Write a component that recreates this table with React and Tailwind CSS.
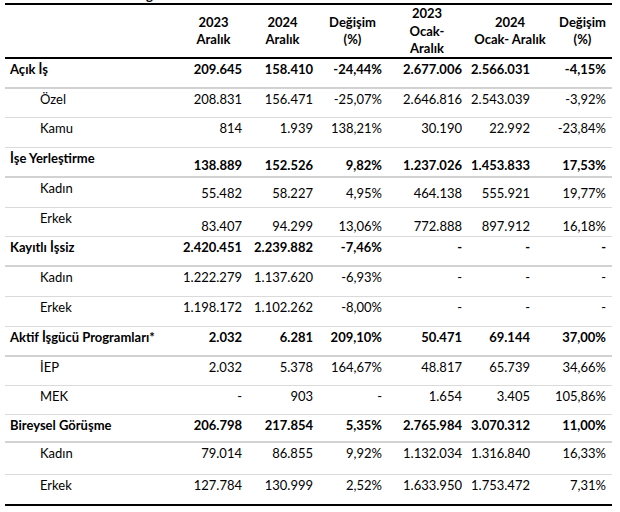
import React from 'react';

const rows = [
  { label: 'Açık İş', group: true, h: 'h-[30px]', v: ['209.645', '158.410', '-24,44%', '2.677.006', '2.566.031', '-4,15%'] },
  { label: 'Özel', h: 'h-[29px]', v: ['208.831', '156.471', '-25,07%', '2.646.816', '2.543.039', '-3,92%'] },
  { label: 'Kamu', h: 'h-[30px]', v: ['814', '1.939', '138,21%', '30.190', '22.992', '-23,84%'] },
  { label: 'İşe Yerleştirme', group: true, low: 'pt-[7px]', h: 'h-[30px]', v: ['138.889', '152.526', '9,82%', '1.237.026', '1.453.833', '17,53%'] },
  { label: 'Kadın', low: 'pt-[5px]', h: 'h-[30px]', v: ['55.482', '58.227', '4,95%', '464.138', '555.921', '19,77%'] },
  { label: 'Erkek', low: 'pt-[8px]', h: 'h-[29px]', v: ['83.407', '94.299', '13,06%', '772.888', '897.912', '16,18%'] },
  { label: 'Kayıtlı İşsiz', group: true, h: 'h-[30px]', v: ['2.420.451', '2.239.882', '-7,46%', '-', '-', '-'] },
  { label: 'Kadın', h: 'h-[30px]', v: ['1.222.279', '1.137.620', '-6,93%', '-', '-', '-'] },
  { label: 'Erkek', h: 'h-[30px]', v: ['1.198.172', '1.102.262', '-8,00%', '-', '-', '-'] },
  { label: 'Aktif İşgücü Programları*', group: true, h: 'h-[30px]', v: ['2.032', '6.281', '209,10%', '50.471', '69.144', '37,00%'] },
  { label: 'İEP', h: 'h-[29px]', v: ['2.032', '5.378', '164,67%', '48.817', '65.739', '34,66%'] },
  { label: 'MEK', h: 'h-[29px]', v: ['-', '903', '-', '1.654', '3.405', '105,86%'] },
  { label: 'Bireysel Görüşme', group: true, h: 'h-[28px]', v: ['206.798', '217.854', '5,35%', '2.765.984', '3.070.312', '11,00%'] },
  { label: 'Kadın', h: 'h-[32px]', v: ['79.014', '86.855', '9,92%', '1.132.034', '1.316.840', '16,33%'] },
  { label: 'Erkek', h: 'h-[31px]', v: ['127.784', '130.999', '2,52%', '1.633.950', '1.753.472', '7,31%'] },
];

// right padding of each number column
const pads = ['pr-[5px]', 'pr-[5px]', 'pr-[5px]', 'pr-[5px]', 'pr-[23px]', 'pr-[6px]'];

const grid = 'grid grid-cols-[175px_67px_71px_69px_80px_86px_59px]';

const Head = ({ children }) => (
  <div className="flex items-center justify-center text-center font-bold leading-[17.5px]">
    <div>{children}</div>
  </div>
);

export default function App() {
  return (
    <div className="w-[620px] h-[512px] overflow-hidden bg-white text-black font-['Lato',sans-serif] text-[13px]">
      <div className="ml-[5px] w-[607px]">
        {/* bottom of the cut-off title */}
        <div className="h-[3px] overflow-hidden">
          <div className="-mt-[13px] pl-[141px] font-bold leading-[17px]">g</div>
        </div>

        {/* Header */}
        <div className={`${grid} h-[56px] border-y-2 border-black`}>
          <div />
          <Head>2023<br />Aralık</Head>
          <Head>2024<br />Aralık</Head>
          <Head>Değişim<br />(%)</Head>
          <Head>2023<br />Ocak-<br />Aralık</Head>
          <Head>2024<br />Ocak- Aralık</Head>
          <Head>Değişim<br />(%)</Head>
        </div>

        {/* Body */}
        {rows.map((r, i) => {
          const last = i === rows.length - 1;
          const border = last
            ? 'border-b-2 border-black'
            : r.group
            ? 'border-b-2 border-[#d2d2d2]'
            : 'border-b border-[#dadada]';
          return (
            <div key={i} className={`${grid} ${r.h} ${border} leading-[17px] pt-[2px]`}>
              <div className={r.group ? 'pl-[5px] font-bold' : 'pl-[35px]'}>{r.label}</div>
              {r.v.map((v, j) => (
                <div key={j} className={`text-right ${pads[j]} ${r.low || ''} ${r.group ? 'font-bold' : ''}`}>
                  {v}
                </div>
              ))}
            </div>
          );
        })}
      </div>
    </div>
  );
}
